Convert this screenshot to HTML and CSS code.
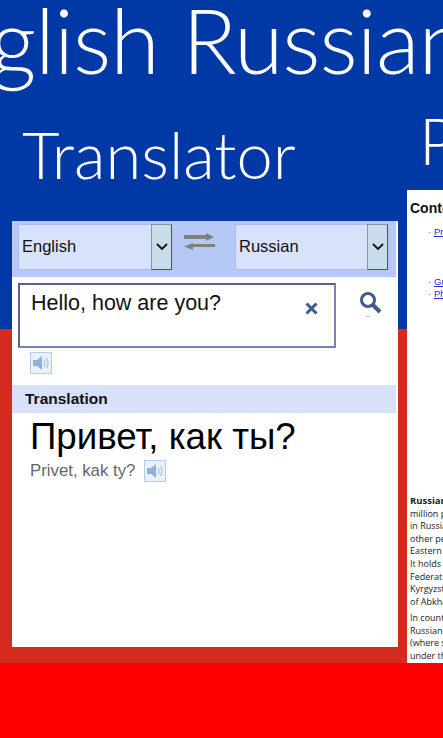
FILE: index.html
```html
<!DOCTYPE html>
<html lang="en">

<head>
   <meta charset="UTF-8">
   <meta name="viewport" content="width=device-width, initial-scale=1.0">
   <title>English Russian Translator</title>
   <link rel="stylesheet" href="styles.css">
</head>

<body>
   <h1 class="apptitle">English Russian Translator</h1>

   <div class="pages">
      <section class="page-main">
         <h2 class="pagetitle">Translator</h2>

         <div class="card">
            <div class="langbar">
               <div class="lang">
                  <span class="lang-name">English</span>
                  <span class="lang-arrow">
                     <svg width="12" height="8" viewBox="0 0 12 8"><path d="M1 1l5 5 5-5" fill="none" stroke="#111" stroke-width="1.8"/></svg>
                  </span>
               </div>
               <svg class="swap" width="31" height="17" viewBox="0 0 31 17">
                  <path d="M0 2h22V0l8 4-8 4V6H0z" fill="#808080"/>
                  <path d="M31 11H9V10L0 13.500 9 17v-3h22z" fill="#808080"/>
               </svg>
               <div class="lang">
                  <span class="lang-name">Russian</span>
                  <span class="lang-arrow">
                     <svg width="12" height="8" viewBox="0 0 12 8"><path d="M1 1l5 5 5-5" fill="none" stroke="#111" stroke-width="1.8"/></svg>
                  </span>
               </div>
            </div>

            <div class="inputline">
               <div class="source">
                  <span>Hello, how are you?</span>
                  <svg class="clear" width="13" height="13" viewBox="0 0 13 13"><path d="M1.500 1.500l10 10M11.500 1.500l-10 10" stroke="#3f5b94" stroke-width="3"/></svg>
               </div>
               <svg class="search" width="24" height="27" viewBox="0 0 24 27">
                  <circle cx="9" cy="9" r="6.500" fill="none" stroke="#3f5b94" stroke-width="3"/>
                  <path d="M14 14l7 7" stroke="#3f5b94" stroke-width="4"/>
                  <path d="M7 25.500h4" stroke="#c5cede" stroke-width="1"/>
               </svg>
            </div>

            <div class="speaker speaker-source">
               <svg width="17" height="14" viewBox="0 0 17 14">
                  <path d="M0 4h4l5-4v14l-5-4H0z" fill="#8fb1df"/>
                  <path d="M11 3.500q2 3.500 0 7M13.500 2q3 5 0 10" fill="none" stroke="#a9c4e8" stroke-width="1.300"/>
               </svg>
            </div>

            <div class="resulthead">Translation</div>
            <p class="result">Привет, как ты?</p>
            <div class="translit">
               <span>Privet, kak ty?</span>
               <div class="speaker">
                  <svg width="17" height="14" viewBox="0 0 17 14">
                     <path d="M0 4h4l5-4v14l-5-4H0z" fill="#8fb1df"/>
                     <path d="M11 3.500q2 3.500 0 7M13.500 2q3 5 0 10" fill="none" stroke="#a9c4e8" stroke-width="1.300"/>
                  </svg>
               </div>
            </div>
         </div>
      </section>

      <section class="page-side">
         <h2 class="pagetitle pagetitle-side">Phrases</h2>

         <div class="article">
            <h3>Contents</h3>
            <ul class="toc toc-first">
               <li><a href="#">Pronunciation</a></li>
            </ul>
            <ul class="toc toc-second">
               <li><a href="#">Grammar</a></li>
               <li><a href="#">Phrases</a></li>
            </ul>
            <p class="intro">
               <b>Russian</b> is spoken by<br>
               million people<br>
               in Russia and<br>
               other people in<br>
               Eastern Europe<br>
               It holds status<br>
               Federation and<br>
               Kyrgyzstan, and<br>
               of Abkhazia
            </p>
            <p class="intro">
               In countries<br>
               Russian, it is<br>
               (where spoken)<br>
               under the law
            </p>
         </div>
      </section>
   </div>
</body>

</html>
```

FILE: styles.css
```css
* {
   padding: 0;
   margin: 0;
   box-sizing: border-box;
}

body {
   width: 443px;
   height: 738px;
   overflow: hidden;
   font-family: "Liberation Sans", Arial, sans-serif;
   background: linear-gradient(#0039a6 0, #0039a6 329px, #d52b1e 329px, #d52b1e 663px, #f00 663px);
}

/** Titres */
.apptitle {
   height: 100px;
   margin-left: -108px;
   font-family: Lato, sans-serif;
   font-size: 90px;
   font-weight: 300;
   letter-spacing: -1px;
   line-height: 79px;
   color: white;
   white-space: nowrap;
}

.pagetitle {
   height: 121px;
   margin-left: 10px;
   font-family: Lato, sans-serif;
   font-size: 65px;
   font-weight: 300;
   line-height: 108px;
   color: white;
}

.pagetitle-side {
   height: 90px;
   margin-left: 12px;
   line-height: 80px;
   white-space: nowrap;
}

/** Colonnes */
.pages {
   display: flex;
   width: 800px;
}

.page-main {
   width: 407px;
   padding-left: 12px;
}

.page-side {
   width: 393px;
}

/** Carte traducteur */
.card {
   width: 386px;
   height: 426px;
   background-color: white;
}

.langbar {
   display: flex;
   align-items: flex-start;
   width: 384px;
   height: 56px;
   padding: 3px 8px 0 6px;
   background-color: #b5c8f6;
}

.lang {
   display: flex;
   width: 154px;
   height: 46px;
   background-color: #d8e3fb;
   border: 1px solid #a9bdf0;
   font-size: 16.500px;
   color: #111;
}

.lang + .swap + .lang {
   width: 153px;
}

.lang-name {
   flex: 1;
   padding-left: 3px;
   line-height: 43px;
}

.lang-arrow {
   display: flex;
   align-items: center;
   justify-content: center;
   width: 21px;
   margin: -1px -1px -1px 0;
   background-color: #c9dcea;
   border: 1px solid #4a545e;
   border-top-color: #8b959e;
   border-left-color: #8b959e;
}

.swap {
   margin: 9px 20px 0 12px;
}

.inputline {
   display: flex;
   align-items: flex-start;
   padding: 6px 0 0 6px;
}

.source {
   display: flex;
   justify-content: space-between;
   width: 318px;
   height: 65px;
   padding: 6px 16px 0 11px;
   border: 2px solid #7486b3;
   border-top-color: #56648c;
   border-left-color: #56648c;
   font-size: 21.500px;
   color: #111;
}

.clear {
   margin-top: 11px;
}

.search {
   margin: 8px 0 0 23px;
}

.speaker {
   display: flex;
   align-items: center;
   justify-content: center;
   width: 22px;
   height: 22px;
   background-color: #eaf1fb;
   border: 1px solid #b4cdee;
}

.speaker-source {
   margin: 4px 0 0 18px;
}

.resulthead {
   width: 384px;
   height: 28px;
   margin-top: 11px;
   padding-left: 13px;
   background-color: #d8e1f9;
   font-size: 15.500px;
   font-weight: bold;
   line-height: 28px;
   color: #111;
}

.result {
   padding: 2px 0 0 18px;
   font-size: 36.700px;
   line-height: 44px;
   color: #000;
}

.translit {
   display: flex;
   align-items: center;
   gap: 9px;
   padding: 1px 0 0 18px;
   font-size: 16.800px;
   color: #666;
}

/** Article */
.article {
   width: 393px;
   height: 473px;
   overflow: hidden;
   padding: 10px 3px;
   background-color: white;
   color: #222;
}

.article h3 {
   font-size: 14px;
   line-height: 17px;
   color: #111;
}

.toc {
   margin-left: 19px;
   font-size: 9.500px;
   line-height: 11px;
   list-style: none;
}

.toc li::before {
   content: "▪";
   display: inline-block;
   width: 5px;
   font-size: 4px;
   color: #666;
   vertical-align: middle;
}

.toc a {
   color: #2a2ae0;
}

.toc-first {
   margin-top: 9px;
}

.toc-second {
   margin-top: 38px;
}

.intro {
   margin-bottom: 4px;
   font-family: "Open Sans", sans-serif;
   font-size: 9px;
   line-height: 12.600px;
   white-space: nowrap;
}

.intro b {
   font-size: 9.500px;
}

.toc-second + .intro {
   margin-top: 195px;
}
```
